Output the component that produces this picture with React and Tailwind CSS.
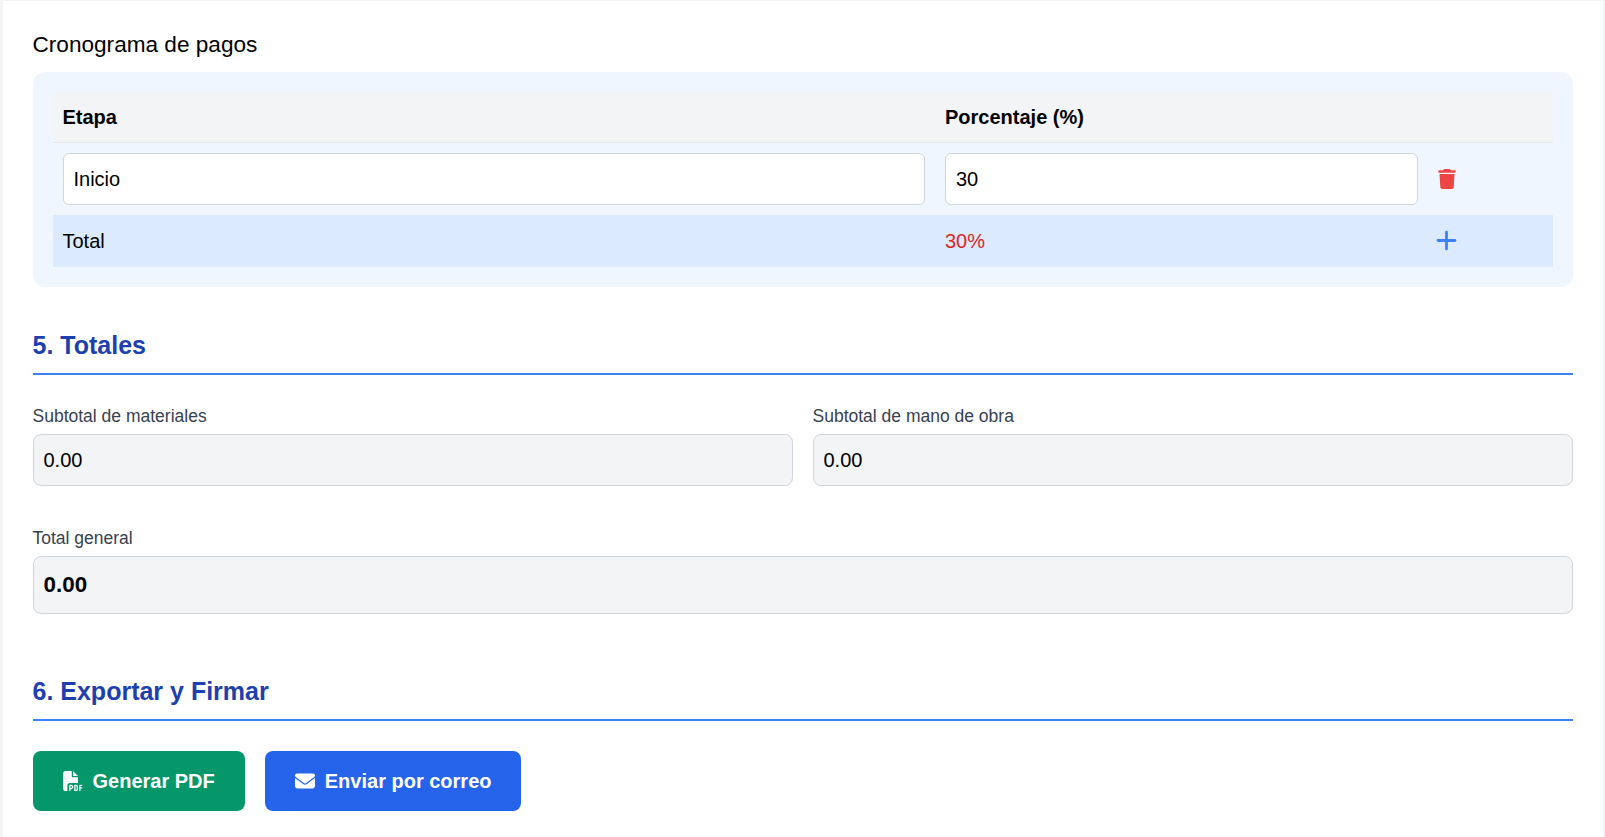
import { Plus } from 'lucide-react'
import { FaEnvelope, FaFilePdf, FaTrash } from 'react-icons/fa6'

function SectionTitle({ children, className = '' }) {
  return (
    <h2 className={`border-b-2 border-[#3b82f6] pb-[10px] text-[25px] leading-[36px] font-bold text-[#1e40af] ${className}`}>
      {children}
    </h2>
  )
}

function ReadOnlyField({ label, value, bold }) {
  return (
    <div>
      <label className="mb-[5px] block text-[17.5px] leading-[26px] text-[#374151]">{label}</label>
      <input
        readOnly
        value={value}
        className={`block w-full rounded-lg border border-[#d1d5db] bg-[#f3f4f6] px-[10px] text-black outline-none ${
          bold ? 'h-[58px] text-[22.4px] font-bold' : 'h-[52px] pt-[2px] text-[20px]'
        }`}
      />
    </div>
  )
}

export default function App() {
  return (
    <div className="h-[837px] overflow-hidden bg-[#f3f4f6] font-['Liberation_Sans',Arial,sans-serif] text-[20px] text-black">
      <main className="mx-auto mt-px h-[836px] w-[1600px] bg-white px-[30px] pt-[28px]">
        <h3 className="mb-[11px] text-[22.6px] leading-[32px]">Cronograma de pagos</h3>

        <div className="rounded-xl bg-[#eff6ff] p-[20px]">
          <table className="w-full table-fixed border-collapse">
            <colgroup>
              <col className="w-[882.5px]" />
              <col className="w-[492.5px]" />
              <col />
            </colgroup>
            <thead>
              <tr className="h-[50px] border-b border-[#e5e7eb] bg-[#f3f4f6] text-left">
                <th className="px-[10px] font-bold">Etapa</th>
                <th className="px-[10px] font-bold">Porcentaje (%)</th>
                <th />
              </tr>
            </thead>
            <tbody>
              <tr>
                <td className="p-[10px]">
                  <input readOnly value="Inicio" className="block h-[52px] w-full rounded-md border border-[#d1d5db] bg-white px-[10px] pt-[2px] outline-none" />
                </td>
                <td className="p-[10px]">
                  <input readOnly value="30" className="block h-[52px] w-full rounded-md border border-[#d1d5db] bg-white px-[10px] pt-[2px] outline-none" />
                </td>
                <td className="p-[10px]">
                  <FaTrash className="h-[20px] w-[18px] text-[#ef4444]" />
                </td>
              </tr>
              <tr className="h-[52px] bg-[#dbeafe]">
                <td className="px-[10px]">Total</td>
                <td className="px-[10px] text-[#dc2626]">30%</td>
                <td className="px-[10px]">
                  <Plus size={29} strokeWidth={2.3} className="-ml-[6px] text-[#3b82f6]" />
                </td>
              </tr>
            </tbody>
          </table>
        </div>

        <SectionTitle className="mt-[40px]">5. Totales</SectionTitle>

        <div className="mt-[28px] grid grid-cols-2 gap-x-[20px]">
          <ReadOnlyField label="Subtotal de materiales" value="0.00" />
          <ReadOnlyField label="Subtotal de mano de obra" value="0.00" />
        </div>
        <div className="mt-[39px]">
          <ReadOnlyField label="Total general" value="0.00" bold />
        </div>

        <SectionTitle className="mt-[59px]">6. Exportar y Firmar</SectionTitle>

        <div className="mt-[30px] flex gap-[20px]">
          <button className="flex h-[60px] items-center gap-[10px] rounded-lg bg-[#059669] px-[30px] font-bold text-white">
            <FaFilePdf className="h-[20px] w-[20px]" /> Generar PDF
          </button>
          <button className="flex h-[60px] items-center gap-[10px] rounded-lg bg-[#2563eb] px-[30px] font-bold text-white">
            <FaEnvelope className="h-[20px] w-[20px]" /> Enviar por correo
          </button>
        </div>
      </main>
    </div>
  )
}
